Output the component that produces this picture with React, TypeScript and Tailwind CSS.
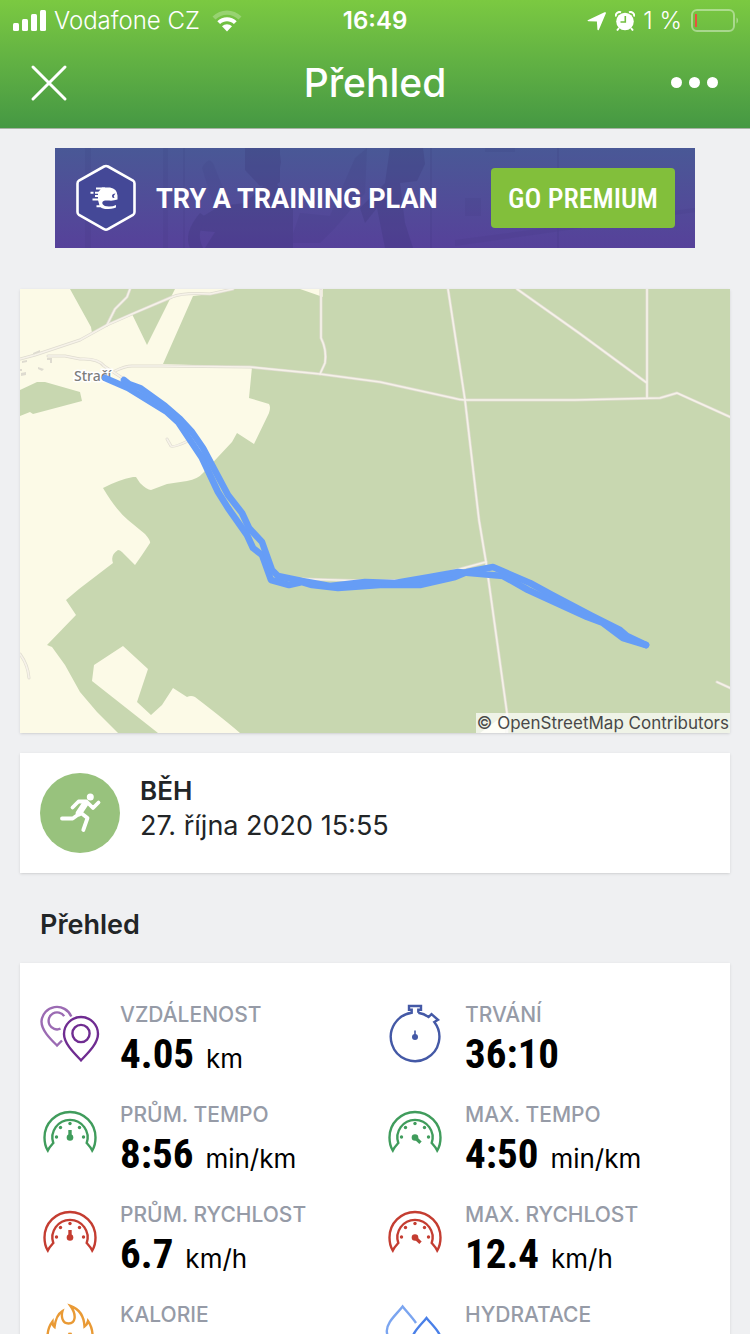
import React from 'react';

type IconProps = { children: React.ReactNode; className?: string };

function StatIcon({ children, className = '' }: IconProps) {
  return (
    <svg viewBox="0 0 60 60" fill="none" stroke="currentColor" strokeWidth="2.4" aria-hidden="true"
      className={`w-[60px] h-[60px] shrink-0 ${className}`}>
      {children}
    </svg>
  );
}

function PinsIcon() {
  return (
    <StatIcon className="text-[#6f2c91]">
      <g className="text-[#9b6bb3]" stroke="currentColor">
        <path d="M31.3 13.5A15.5 15.5 0 0 0 1.5 18.5C1.5 27.5 10.5 36 17 42.5L22 37.5" />
        <path d="M24.2 13.2A8.5 8.5 0 1 0 20.5 25.7" />
      </g>
      <path d="M41 57.3C34 50 24 40.5 24 31a17 17 0 0 1 34 0C58 40.5 48 50 41 57.3Z" />
      <circle cx="41" cy="30.5" r="8.6" />
    </StatIcon>
  );
}

function StopwatchIcon() {
  return (
    <StatIcon className="text-[#4459a6]">
      <path d="M33.3 9.8V6.7H36V3H24v3.7h2.7v3.1A24.3 24.3 0 1 0 49.3 19L53 16.8L46.5 11.2L43.6 14A24 24 0 0 0 33.3 9.8" />
      <circle cx="30" cy="34" r="3" fill="currentColor" stroke="none" />
      <path d="M30 34V27.5" strokeWidth="1.6" />
    </StatIcon>
  );
}

function GaugeIcon({ max = false, className }: { max?: boolean; className: string }) {
  return (
    <StatIcon className={className}>
      <path d="M7.8 47.5C5.5 44 4.5 39 4.5 34.5A25.5 25.5 0 0 1 55.5 34.5C55.5 39 54.5 44 52.2 47.5C50.5 44 49 42.5 46.7 40A17.6 17.6 0 1 0 13.3 40C11 42.5 9.5 44 7.8 47.5Z" />
      <g fill="currentColor" stroke="none">
        <circle cx="30" cy="20.5" r="1.7" />
        <circle cx="20.5" cy="24.5" r="1.7" />
        <circle cx="39.5" cy="24.5" r="1.7" />
        <circle cx="16.5" cy="34" r="1.7" />
        <circle cx="43.5" cy="34" r="1.7" />
        <circle cx="30" cy="34.5" r="3.3" />
      </g>
      <path d={max ? 'M30 34.5L35.5 39.7' : 'M30 35V27'} strokeWidth="3.4" />
    </StatIcon>
  );
}

function FlameIcon() {
  return (
    <StatIcon className="text-[#e99a35]">
      <path d="M30 57C17 57 8 48 7.5 36C7.2 29 9 23 12.5 18.5C12.5 21 13.2 23 14.5 24C15.5 16 17.5 11 22.5 8C21 13 22 20.5 28.5 20.5C35.5 20.5 37 12 30.5 3C39 6 44 13 44.5 23.5C46 22.5 47.5 20.5 48 18C51.5 23 53 29 52.5 36C52 48 43 57 30 57Z" />
      <path d="M30 30C34 36 38 38 38 45" />
      <path d="M30 30C26 36 22 38 22 45" />
    </StatIcon>
  );
}

function DropsIcon() {
  return (
    <StatIcon className="text-[#4a80e8]">
      <path className="text-[#7ba5f0]" stroke="currentColor" d="M22 39C9 43 2 36 1.8 28C2 19 10 13 17.6 3.5C22 9 27 14 31 20" />
      <path d="M41.5 15C36 22 26 30 26 41a15.5 15.5 0 0 0 31 0C57 30 47 22 41.5 15Z" />
    </StatIcon>
  );
}

const stats = [
  { label: 'VZDÁLENOST', value: '4.05', unit: 'km', icon: <PinsIcon /> },
  { label: 'TRVÁNÍ', value: '36:10', unit: '', icon: <StopwatchIcon /> },
  { label: 'PRŮM. TEMPO', value: '8:56', unit: 'min/km', icon: <GaugeIcon className="text-[#409c5c]" /> },
  { label: 'MAX. TEMPO', value: '4:50', unit: 'min/km', icon: <GaugeIcon max className="text-[#409c5c]" /> },
  { label: 'PRŮM. RYCHLOST', value: '6.7', unit: 'km/h', icon: <GaugeIcon className="text-[#c43d31]" /> },
  { label: 'MAX. RYCHLOST', value: '12.4', unit: 'km/h', icon: <GaugeIcon max className="text-[#c43d31]" /> },
  { label: 'KALORIE', value: '', unit: '', icon: <FlameIcon /> },
  { label: 'HYDRATACE', value: '', unit: '', icon: <DropsIcon /> },
];

function StatusBar() {
  return (
    <div className="grid grid-cols-[1fr_auto_1fr] items-center h-[42px] px-3 text-2xl leading-10">
      <div className="flex items-center gap-2">
        <svg viewBox="0 0 34 22" className="w-[34px] h-[22px]" fill="currentColor" aria-hidden="true">
          <rect x="1" y="13" width="6" height="8" rx="1.5" />
          <rect x="10" y="9" width="6" height="12" rx="1.5" />
          <rect x="19" y="4" width="6" height="17" rx="1.5" />
          <rect x="28" y="0" width="6" height="21" rx="1.5" />
        </svg>
        <span className="font-light">Vodafone CZ</span>
        <svg viewBox="0 0 30 22" className="w-[30px] h-[22px] ml-1" fill="currentColor" aria-hidden="true">
          <path opacity=".25" d="M.5 6.5C8.5-1.5 21.5-1.5 29.5 6.5L26.5 9.5C20 3 10 3 3.5 9.5Z" />
          <path d="M5.3 11.3C10.6 6 19.4 6 24.7 11.3L21.9 14C18 10.3 12 10.3 8.1 14Z" />
          <path d="M10 16.2C12.8 13.5 17.2 13.5 20 16.2L15 21.5Z" />
        </svg>
      </div>
      <span className="font-semibold">16:49</span>
      <div className="flex items-center justify-end gap-2">
        <svg viewBox="0 0 20 20" className="w-5 h-5" fill="currentColor" aria-hidden="true">
          <path d="M1.2 8.9L17.5 1.3C18.7.8 19.3 1.5 18.8 2.6L12 18.5C11.4 19.7 10.5 19.6 10.4 18.3L9.9 10.6L1.5 10.2C.2 10 .1 9.4 1.2 8.9Z" />
        </svg>
        <svg viewBox="0 0 20 20" className="w-5 h-5" aria-hidden="true">
          <circle cx="10" cy="10.5" r="8.8" fill="currentColor" />
          <path d="M1 5.5C0 3 3 0 6 1.3M19 5.5C20 3 17 0 14 1.3" stroke="currentColor" strokeWidth="2" fill="none" />
          <path d="M4 17L2 19.5M16 17L18 19.5" stroke="currentColor" strokeWidth="2" />
          <path d="M10.3 5V11H5.5" stroke="#72bd3e" strokeWidth="1.6" fill="none" />
        </svg>
        <span className="font-light whitespace-nowrap">1 %</span>
        <svg viewBox="0 0 48 24" className="w-12 h-6" fill="none" aria-hidden="true">
          <rect x="2" y="1" width="42" height="21" rx="5" stroke="#fff" strokeOpacity=".4" strokeWidth="2" />
          <rect x="5" y="5" width="2" height="13" fill="#e8513f" />
          <path d="M46.5 8.5C48.5 9.5 48.5 13.5 46.5 14.5Z" fill="#fff" fillOpacity=".4" />
        </svg>
      </div>
    </div>
  );
}

function Header() {
  return (
    <header className="bg-linear-to-b from-[#7bc941] to-[#459843] text-white border-b border-[#a7b3a4]">
      <StatusBar />
      <div className="grid grid-cols-[1fr_auto_1fr] items-center h-[86px] px-7 pb-1">
        <button type="button" aria-label="Zavřít" className="w-10 h-10">
          <svg viewBox="0 0 40 40" stroke="currentColor" strokeWidth="3" strokeLinecap="round">
            <path d="M5 4L37 36M37 4L5 36" />
          </svg>
        </button>
        <h1 className="text-[39px] leading-[48px] font-medium">Přehled</h1>
        <button type="button" aria-label="Více" className="justify-self-end w-[52px] h-10">
          <svg viewBox="0 0 52 40" fill="currentColor">
            <circle cx="6.5" cy="19.5" r="5.5" />
            <circle cx="24.5" cy="19.5" r="5.5" />
            <circle cx="42.5" cy="19.5" r="5.5" />
          </svg>
        </button>
      </div>
    </header>
  );
}

function PremiumBanner() {
  return (
    <section className="relative max-w-[640px] mx-auto h-[100px] px-5 flex items-center bg-linear-to-b from-[#495896] to-[#56419a] text-white">
      {/* faint gym scene behind the text */}
      <svg viewBox="0 0 640 100" preserveAspectRatio="xMidYMid slice" className="absolute inset-0 w-full h-full" aria-hidden="true">
        <g fill="#35306f" opacity=".22">
          <path d="M30 0h6v100h-6zM108 0h5v100h-5zM128 0h2v100h-2z" opacity=".4" />
          <path d="M195 0H225V34L222 36L238 60V100H150L160 84L138 82L145 70L165 58L190 55L208 38L198 20Z" />
          <path d="M190 0H224L226 14L222 36L205 38L190 22Z" />
          <path d="M147 20Q155 5 160 20L170 45L158 55Z" opacity=".4" />
          <path d="M135 100Q128 85 145 65L152 70Q140 84 148 100Z" />
          <path d="M300 10L312 0L310 45L280 80L265 95H235L245 65L275 68Z" opacity=".5" />
          <path d="M335 0H368L370 16L362 33L345 35L350 75L358 100H330L322 60L310 75L305 60L330 35Z" />
          <path d="M375 0h2v100h-2zM502 0h2v100h-2z" opacity=".5" />
          <path d="M410 50h16v18h-16zM430 0h30v4h-30zM400 92L640 60V64L400 98Z" opacity=".4" />
        </g>
      </svg>
      <svg viewBox="0 0 60 68" className="relative w-[60px] h-[68px] shrink-0 ml-px" aria-hidden="true">
        <path d="M28 2.5Q30 1.5 32 2.5L57 16.5Q58.5 17.5 58.5 19.5V48Q58.5 50 57 51L32 65Q30 66.5 28 65L3 51Q1.5 50 1.5 48V19.5Q1.5 17.5 3 16.5Z"
          fill="#444897" stroke="#fff" strokeWidth="2.6" />
        <path d="M26 23.5H34Q41 24.500 41.500 31.500V35.500Q37 37 33 36.500H29Q25.500 37 26.500 40Q28 42.500 33 42.500Q37 42.500 40 41V43.500Q36 45 29 45Q25 44.500 23.500 41.500L22 36V28.500Z" fill="#fff" />
        <path d="M20 24.5H29M14.5 28.700H17.500M19 28.700H28M19 32H27M16.500 35.500H27M20.500 42.200H27" stroke="#fff" strokeWidth="1.900" />
        <path d="M39.500 29.500Q36 29.500 36 32Q36 34.500 38.500 34L37.700 32Z" fill="#444897" />
      </svg>
      <p className="relative flex-1 pl-5 pt-0.5 text-[27px] leading-9 font-bold font-['Roboto',sans-serif] whitespace-nowrap">TRY A TRAINING PLAN</p>
      <button type="button" className="relative w-[184px] h-[60px] pt-0.5 rounded bg-[#82bf3b] text-[28px] leading-8 font-medium font-['Roboto_Condensed','Roboto',sans-serif] whitespace-nowrap">GO PREMIUM</button>
    </section>
  );
}

const forests = [
  'M70 289L91 327L92 333L107 325L132 314L147 345L175 289Z',
  'M20 390L37 382H45L80 392L82 401L33 414L30 412L20 416Z',
  'M193 296L210 294L233 289H300L323 297V289H730V733H240Q225 720 195 697Q191 695 187 697L173 688L162 705L151 715L137 702L148 669L123 646L94 665L92 681L158 733H118L97 712L80 692L65 665L52 647L47 645L76 615L66 600L79 589L113 563Q110 555 118 550Q120 550 122 552L135 565L142 555L150 543Q151 541 145 534L128 520Q116 510 103 488Q118 480 133 477H136L140 483Q147 490 151 490L167 484L187 481Q198 479 203 473L232 442L237 433L254 444L269 413Q271 407 269 404L249 398L252 367L163 364Z',
];

const roads = [
  'M20 359L35 355L80 340L107 325L132 314L172 297Q183 292 210 294L233 289',
  'M107 325L115 309L127 297L130 289',
  'M48 356H65L80 359Q98 358 104 366L130 383L145 392',
  'M115 371Q125 366 132 366H160L250 367L320 374L380 382L453 398Q460 400 465 400H575L660 398L677 393L730 417',
  'M321 290V338Q327 350 325 363L320 374',
  'M448 289L465 400L479 520L486 562L507 713V733',
  'M517 289L579 333L647 383M647 289V398',
  'M486 562L460 569L420 580L370 581L302 579',
  'M717 682L730 688',
  'M20 654Q28 665 29 678',
  'M167 439L171 446Q173 448 188 441',
];

const track = [
  'M105 378L128 388L167 412L178 422L202 458L218 492L228 508L247 535L253 548L262 555L271 580L289 585L302 582L312 585L338 588L380 585H420L433 582L455 577L467 572L493 567L530 583L552 595L592 616L620 630L627 636L646 645',
  'M124 380L129 384L140 388L165 406L180 419L192 432L203 448L212 465L228 495L242 513L249 528L262 542L272 570L278 576L302 581L330 586L365 582L395 583L430 577L458 572L503 576L528 590L587 617L603 623L623 638L646 645',
];

function RouteMap() {
  return (
    <section className="relative mt-[41px] shadow-sm overflow-hidden">
      <svg viewBox="20 289 710 444" preserveAspectRatio="xMidYMid slice" className="block w-full bg-[#fcfae7]" fill="none" role="img" aria-label="Mapa trasy">
        {forests.map((d) => <path key={d} d={d} fill="#c8d7b0" />)}
        <path d="M480 733L507 713V733Z" fill="#fcfae7" />
        <g fill="#dedbd0">
          <path d="M33 353L40 350V354L33 356Z" />
          <path d="M22 361L27 360V362L22 363ZM47 358h5v5h-2v-3h-3ZM38 367L44 369L42 371L38 369ZM20 369h2v2h-2ZM21 373L26 372V375L21 376Z" />
        </g>
        <g strokeLinejoin="round" strokeLinecap="round">
          {roads.map((d) => <path key={d} d={d} stroke="#dfdcd0" strokeWidth="3" />)}
          {roads.map((d) => <path key={d} d={d} stroke="#f6f2e9" strokeWidth="1.6" />)}
        </g>
        <text x="74" y="381" fill="#7d7d7d" stroke="#fff" strokeWidth="3" paintOrder="stroke" className="text-[14px] font-medium font-['Noto_Sans',sans-serif]">Stračí</text>
        {track.map((d) => <path key={d} d={d} stroke="#669df6" strokeWidth="6.6" strokeLinejoin="round" strokeLinecap="round" />)}
      </svg>
      <small className="absolute right-0 bottom-0 bg-white/70 px-px text-[17px] leading-5 text-[#484848]">© OpenStreetMap Contributors</small>
    </section>
  );
}

function ActivityCard() {
  return (
    <section className="mt-5 bg-white shadow-sm p-5 flex gap-5">
      <svg viewBox="0 0 80 80" className="w-20 h-20 shrink-0" aria-hidden="true">
        <circle cx="40" cy="40" r="40" fill="#98c27d" />
        <g fill="none" stroke="#fff" strokeWidth="3.8" strokeLinecap="round" strokeLinejoin="round">
          <path d="M32.5 34.5L38.5 28.5H46.5L53 35L58.5 29.5" />
          <path d="M39 41L32.7 45.5H22" />
          <path d="M41 40L47.5 45L43.3 57" />
          <path d="M45 31L39 40" strokeWidth="6.5" />
        </g>
        <circle cx="50.3" cy="24" r="3.5" fill="#fff" />
      </svg>
      <div className="text-[#222527]">
        <h2 className="text-[26px] leading-[35px] font-semibold">BĚH</h2>
        <p className="text-[27px] leading-[35px]">27. října 2020 15:55</p>
      </div>
    </section>
  );
}

export default function App() {
  return (
    <div className="flex flex-col h-screen bg-[#eff0f2] font-['Inter',sans-serif]">
      <Header />
      <main className="flex-1 min-h-0 overflow-y-auto [scrollbar-width:none] px-5 pt-[19px]">
        <PremiumBanner />
        <RouteMap />
        <ActivityCard />
        <h2 className="px-5 pt-[34px] pb-5 text-[27px] leading-9 font-semibold text-[#222527]">Přehled</h2>
        <dl className="bg-white shadow-sm px-5 pt-10 grid grid-cols-2 gap-x-5">
          {stats.map((stat) => (
            <div key={stat.label} className="flex gap-5 h-[100px]">
              {stat.icon}
              <div className="whitespace-nowrap">
                <dt className="text-[21px] leading-6 font-medium text-[#969ba7]">{stat.label}</dt>
                {stat.value && (
                  <dd className="flex items-baseline gap-3 text-black">
                    <span className="text-[41px] leading-[54px] font-bold font-['Roboto_Condensed','Roboto',sans-serif]">{stat.value}</span>
                    <span className="text-[26px]">{stat.unit}</span>
                  </dd>
                )}
              </div>
            </div>
          ))}
        </dl>
      </main>
    </div>
  );
}
